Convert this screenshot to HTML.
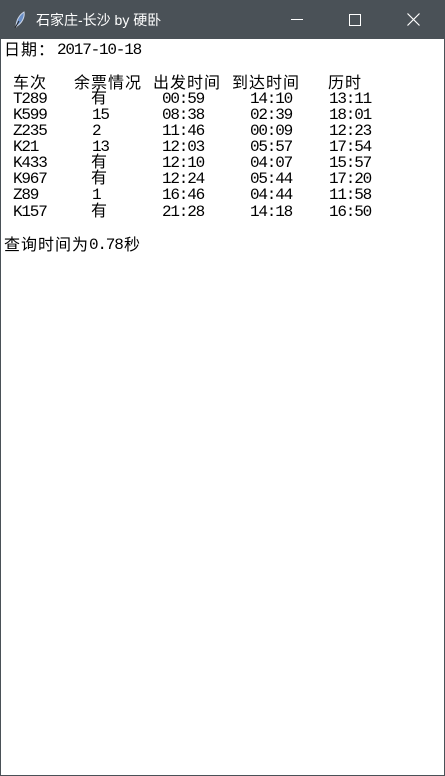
<!DOCTYPE html>
<html><head><meta charset="utf-8"><style>
*{margin:0;padding:0}
body{width:445px;height:776px;position:relative;background:#fff;overflow:hidden;font-family:"Liberation Mono","Noto Sans CJK SC",monospace;color:#000}
.tb{position:absolute;left:0;top:0;width:445px;height:39px;background:#4a5157}
.win{position:absolute;left:0;top:39px;width:443px;height:736px;border:1px solid #4a5157;border-top:0;background:#fff}
.t{position:absolute;font-size:16px;letter-spacing:-1.2px;line-height:16px;white-space:pre}
.c{font-family:"Noto Sans CJK SC",sans-serif;font-size:16px;letter-spacing:1px}
.title{position:absolute;left:36px;top:10px;color:#fff;font-family:"Liberation Sans","Noto Sans CJK SC",sans-serif;font-size:14px}
</style></head><body>
<div class="tb">
<svg style="position:absolute;left:13px;top:11px" width="14" height="18" viewBox="0 0 14 18"><path d="M3 16 C3 10 6 4 11 1 C12 6 9 12 4 15 Z" fill="#6a8fc8" stroke="#cfd8e8" stroke-width="1"/><path d="M2 17 L6 10" stroke="#222" stroke-width="1"/></svg>
<div class="title">石家庄-长沙 by 硬卧</div>
<div style="position:absolute;left:291px;top:19px;width:12px;height:1px;background:#fff"></div>
<div style="position:absolute;left:349px;top:14px;width:10px;height:10px;border:1px solid #fff"></div>
<svg style="position:absolute;left:407px;top:13px" width="13" height="13"><path d="M0.5 0.5 L12.5 12.5 M12.5 0.5 L0.5 12.5" stroke="#fff" stroke-width="1.2"/></svg>
</div>
<div class="win"></div>
<div class="t c" style="left:4px;top:40px">日期：</div><div class="t" style="left:57px;top:42px">2017-10-18</div>
<div class="t c" style="left:13px;top:73px">车次</div>
<div class="t c" style="left:74px;top:73px">余票情况</div>
<div class="t c" style="left:153px;top:73px">出发时间</div>
<div class="t c" style="left:232px;top:73px">到达时间</div>
<div class="t c" style="left:328px;top:73px">历时</div>

<div class="t" style="left:13px;top:91px">T289</div><div class="t c" style="left:91px;top:88px">有</div><div class="t" style="left:162px;top:91px">00:59</div><div class="t" style="left:250px;top:91px">14:10</div><div class="t" style="left:329px;top:91px">13:11</div>
<div class="t" style="left:13px;top:107px">K599</div><div class="t" style="left:92px;top:107px">15</div><div class="t" style="left:162px;top:107px">08:38</div><div class="t" style="left:250px;top:107px">02:39</div><div class="t" style="left:329px;top:107px">18:01</div>
<div class="t" style="left:13px;top:123px">Z235</div><div class="t" style="left:92px;top:123px">2</div><div class="t" style="left:162px;top:123px">11:46</div><div class="t" style="left:250px;top:123px">00:09</div><div class="t" style="left:329px;top:123px">12:23</div>
<div class="t" style="left:13px;top:139px">K21</div><div class="t" style="left:92px;top:139px">13</div><div class="t" style="left:162px;top:139px">12:03</div><div class="t" style="left:250px;top:139px">05:57</div><div class="t" style="left:329px;top:139px">17:54</div>
<div class="t" style="left:13px;top:155px">K433</div><div class="t c" style="left:91px;top:152px">有</div><div class="t" style="left:162px;top:155px">12:10</div><div class="t" style="left:250px;top:155px">04:07</div><div class="t" style="left:329px;top:155px">15:57</div>
<div class="t" style="left:13px;top:171px">K967</div><div class="t c" style="left:91px;top:168px">有</div><div class="t" style="left:162px;top:171px">12:24</div><div class="t" style="left:250px;top:171px">05:44</div><div class="t" style="left:329px;top:171px">17:20</div>
<div class="t" style="left:13px;top:187px">Z89</div><div class="t" style="left:92px;top:187px">1</div><div class="t" style="left:162px;top:187px">16:46</div><div class="t" style="left:250px;top:187px">04:44</div><div class="t" style="left:329px;top:187px">11:58</div>
<div class="t" style="left:13px;top:204px">K157</div><div class="t c" style="left:91px;top:201px">有</div><div class="t" style="left:162px;top:204px">21:28</div><div class="t" style="left:250px;top:204px">14:18</div><div class="t" style="left:329px;top:204px">16:50</div>

<div class="t c" style="left:4px;top:235px">查询时间为</div><div class="t" style="left:89px;top:237px">0.78</div><div class="t c" style="left:124px;top:235px">秒</div>
</body></html>
